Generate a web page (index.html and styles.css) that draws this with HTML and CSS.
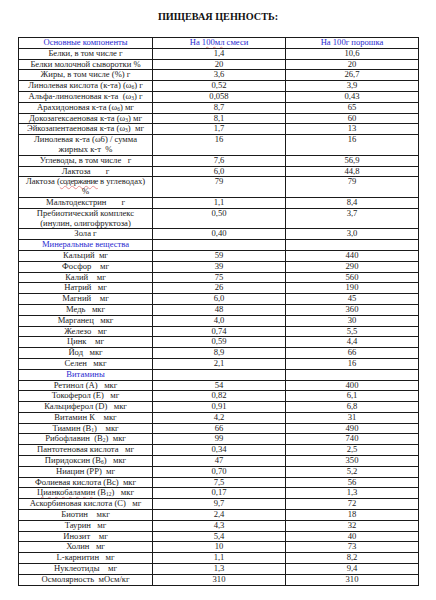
FILE: index.html
```html
<!DOCTYPE html>
<html lang="ru">
<head>
<meta charset="utf-8">
<title>Пищевая ценность</title>
<link rel="stylesheet" href="styles.css">
</head>
<body>
<h1 class="title">ПИЩЕВАЯ ЦЕННОСТЬ:</h1>
<table class="nutri">
<colgroup><col class="c1"><col class="c2"><col class="c3"></colgroup>
<tr class="head"><td>Основные компоненты</td><td>На <span class="spell">100мл</span> смеси</td><td>На 100г порошка</td></tr>
<tr><td>Белки, в том числе г</td><td>1,4</td><td>10,6</td></tr>
<tr><td>Белки молочной сыворотки %</td><td>20</td><td>20</td></tr>
<tr><td>Жиры, в том числе (%) г</td><td>3,6</td><td>26,7</td></tr>
<tr><td>Линолевая кислота (к-та) (ω<sub>6</sub>) г</td><td>0,52</td><td>3,9</td></tr>
<tr><td>Альфа-линоленовая к-та&nbsp; (ω<sub>3</sub>) г</td><td>0,058</td><td>0,43</td></tr>
<tr><td>Арахидоновая к-та (ω<sub>6</sub>) мг</td><td>8,7</td><td>65</td></tr>
<tr><td>Докозагексаеновая к-та (ω<sub>3</sub>) мг</td><td>8,1</td><td>60</td></tr>
<tr><td>Эйкозапентаеновая к-та (ω<sub>3</sub>)&nbsp; мг</td><td>1,7</td><td>13</td></tr>
<tr class="dbl"><td>Линолевая к-та (ω6) / сумма<br>жирных к-т&nbsp; %</td><td>16</td><td>16</td></tr>
<tr><td>Углеводы, в том числе&nbsp;&nbsp; г</td><td>7,6</td><td>56,9</td></tr>
<tr><td>Лактоза&nbsp;&nbsp;&nbsp;&nbsp;&nbsp;&nbsp; г</td><td>6,0</td><td>44,8</td></tr>
<tr class="dbl"><td>Лактоза (<span class="spell tight">содержание</span> в углеводах)<br>%</td><td>79</td><td>79</td></tr>
<tr><td>Мальтодекстрин&nbsp;&nbsp;&nbsp;&nbsp;&nbsp;&nbsp; г</td><td>1,1</td><td>8,4</td></tr>
<tr class="dbl"><td>Пребиотический комплекс<br>(инулин, олигофруктоза)</td><td>0,50</td><td>3,7</td></tr>
<tr><td>Зола г</td><td>0,40</td><td>3,0</td></tr>
<tr class="section"><td>Минеральные вещества</td><td></td><td></td></tr>
<tr><td>Кальций&nbsp; мг</td><td>59</td><td>440</td></tr>
<tr><td>Фосфор&nbsp;&nbsp;&nbsp; мг</td><td>39</td><td>290</td></tr>
<tr><td>Калий&nbsp;&nbsp;&nbsp; мг</td><td>75</td><td>560</td></tr>
<tr><td>Натрий&nbsp;&nbsp; мг</td><td>26</td><td>190</td></tr>
<tr><td>Магний&nbsp;&nbsp;&nbsp; мг</td><td>6,0</td><td>45</td></tr>
<tr><td>Медь&nbsp;&nbsp; мкг</td><td>48</td><td>360</td></tr>
<tr><td>Марганец&nbsp;&nbsp; мкг</td><td>4,0</td><td>30</td></tr>
<tr><td>Железо&nbsp;&nbsp; мг</td><td>0,74</td><td>5,5</td></tr>
<tr><td>Цинк&nbsp;&nbsp;&nbsp; мг</td><td>0,59</td><td>4,4</td></tr>
<tr><td>Йод&nbsp;&nbsp; мкг</td><td>8,9</td><td>66</td></tr>
<tr><td>Селен&nbsp;&nbsp; мкг</td><td>2,1</td><td>16</td></tr>
<tr class="section"><td>Витамины</td><td></td><td></td></tr>
<tr><td>Ретинол (А)&nbsp;&nbsp; мкг</td><td>54</td><td>400</td></tr>
<tr><td>Токоферол (Е)&nbsp;&nbsp; мг</td><td>0,82</td><td>6,1</td></tr>
<tr><td>Кальциферол (D)&nbsp;&nbsp; мкг</td><td>0,91</td><td>6,8</td></tr>
<tr><td>Витамин К&nbsp;&nbsp;&nbsp; мкг</td><td>4,2</td><td>31</td></tr>
<tr><td>Тиамин (B<sub>1</sub>)&nbsp;&nbsp;&nbsp; мкг</td><td>66</td><td>490</td></tr>
<tr><td>Рибофлавин&nbsp; (B<sub>2</sub>)&nbsp; мкг</td><td>99</td><td>740</td></tr>
<tr><td>Пантотеновая кислота&nbsp;&nbsp; мг</td><td>0,34</td><td>2,5</td></tr>
<tr><td>Пиридоксин (B<sub>6</sub>)&nbsp;&nbsp; мкг</td><td>47</td><td>350</td></tr>
<tr><td>Ниацин (PP)&nbsp; мг</td><td>0,70</td><td>5,2</td></tr>
<tr><td>Фолиевая кислота (Bc)&nbsp; мкг</td><td>7,5</td><td>56</td></tr>
<tr><td><span class="spell">Цианкобаламин</span> (B<sub>12</sub>)&nbsp;&nbsp; мкг</td><td>0,17</td><td>1,3</td></tr>
<tr><td>Аскорбиновая кислота (С)&nbsp;&nbsp; мг</td><td>9,7</td><td>72</td></tr>
<tr><td>Биотин&nbsp;&nbsp;&nbsp; мкг</td><td>2,4</td><td>18</td></tr>
<tr><td>Таурин&nbsp;&nbsp; мг</td><td>4,3</td><td>32</td></tr>
<tr><td>Инозит&nbsp;&nbsp;&nbsp; мг</td><td>5,4</td><td>40</td></tr>
<tr><td>Холин&nbsp;&nbsp; мг</td><td>10</td><td>73</td></tr>
<tr><td>L-карнитин&nbsp;&nbsp; мг</td><td>1,1</td><td>8,2</td></tr>
<tr><td>Нуклеотиды&nbsp;&nbsp;&nbsp; мг</td><td>1,3</td><td>9,4</td></tr>
<tr><td>Осмолярность&nbsp; мОсм/кг</td><td>310</td><td>310</td></tr>
</table>
</body>
</html>
```
FILE: styles.css
```css
html, body {
  margin: 0;
  padding: 0;
  background: #ffffff;
}
body {
  font-family: "Liberation Serif", "Times New Roman", serif;
  color: #111111;
  width: 436px;
}
.title {
  margin: 0;
  padding-top: 11px;
  height: 25px;
  box-sizing: border-box;
  font-family: "Liberation Serif", "Times New Roman", serif;
  font-size: 10.2px;
  line-height: 12px;
  font-weight: bold;
  text-align: center;
  color: #111111;
}
.nutri {
  margin: 12px 0 0 18px;
  width: 400px;
  border-collapse: collapse;
  table-layout: fixed;
  border: 1px solid #000000;
  font-family: "Liberation Serif", "Times New Roman", serif;
}
.c1 { width: 134px; }
.c2 { width: 133px; }
.c3 { width: 133px; }
.nutri td {
  border: 1px solid #1a1a1a;
  padding: 0;
  font-family: "Liberation Serif", "Times New Roman", serif;
  font-size: 8.6px;
  line-height: 9.8px;
  height: 9.8px;
  text-align: center;
  vertical-align: middle;
  white-space: nowrap;
  overflow: hidden;
  color: #222222;
}
.nutri .dbl td {
  vertical-align: top;
}
.nutri .head td,
.nutri .section td {
  color: #2a2ad0;
}
.nutri sub {
  font-size: 5.5px;
  line-height: 0;
  vertical-align: -1px;
}
.spell {
  text-decoration: underline wavy #e89090;
  text-decoration-thickness: 0.5px;
  text-underline-offset: 0.5px;
}
.tight {
  letter-spacing: -0.5px;
}
```
